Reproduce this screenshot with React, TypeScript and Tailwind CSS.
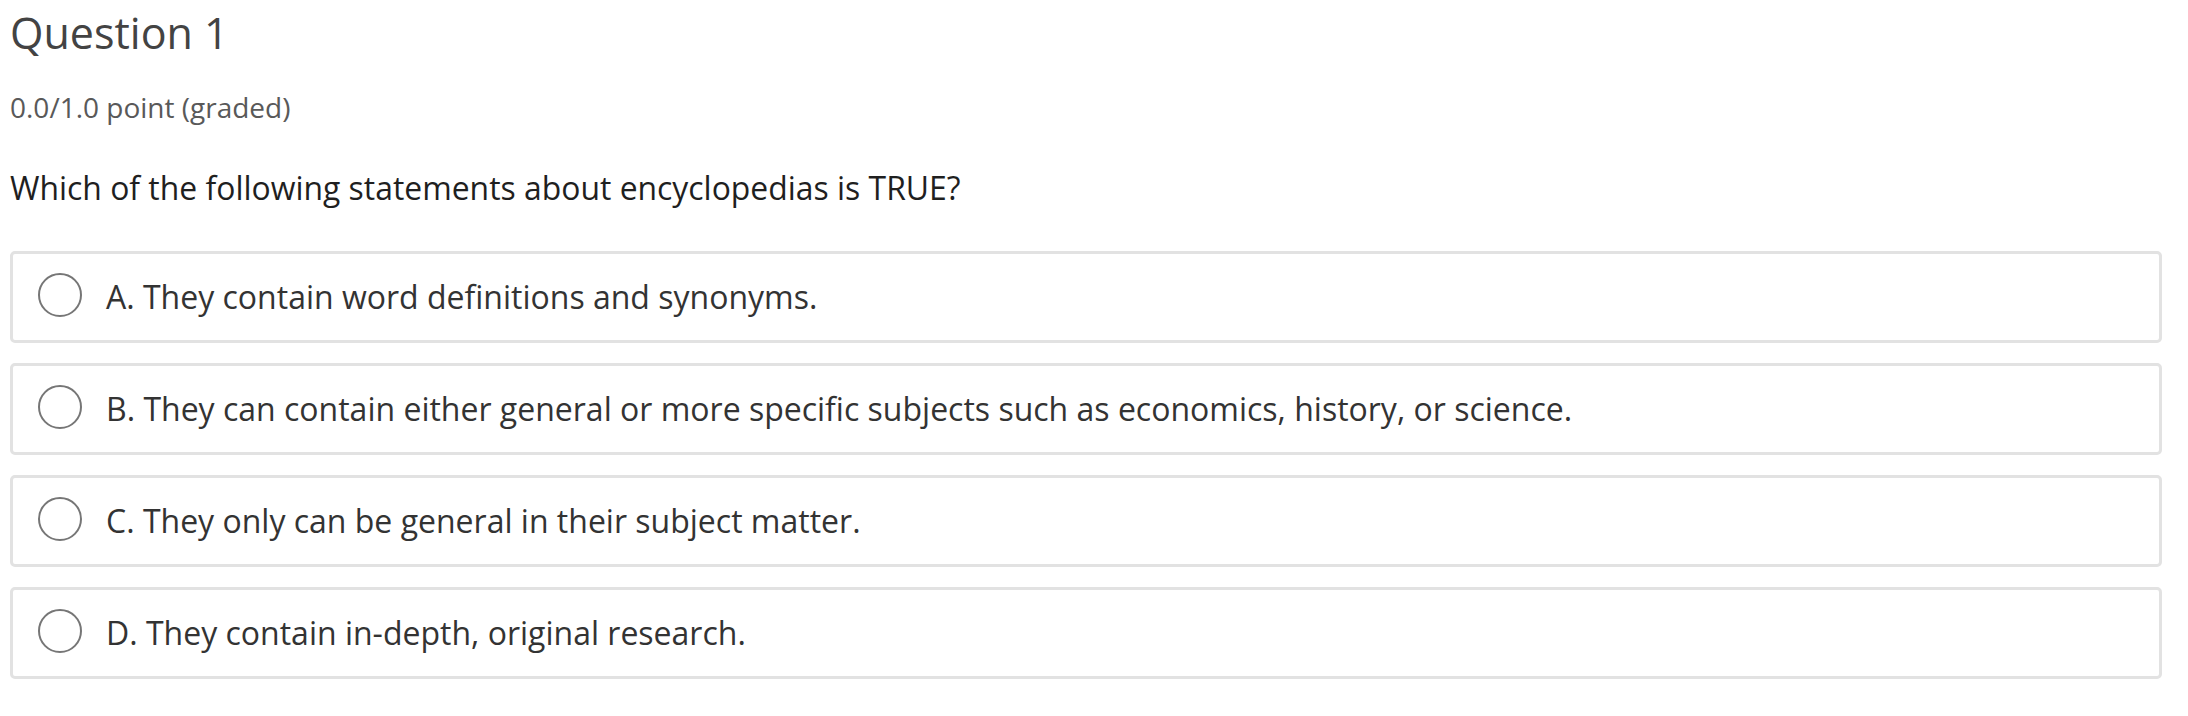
const options = [
  "A. They contain word definitions and synonyms.",
  "B. They can contain either general or more specific subjects such as economics, history, or science.",
  "C. They only can be general in their subject matter.",
  "D. They contain in-depth, original research.",
];

export default function App() {
  return (
    <div
      className="h-[716px] w-[2188px] bg-white pl-[10px]"
      style={{ fontFamily: '"Open Sans", "Noto Sans", sans-serif' }}
    >
      <h3 className="pt-[8px] text-[43px] leading-[50px] font-normal text-[#434343]">
        Question 1
      </h3>
      <div className="mt-[29px] text-[28px] leading-[40px] text-[#595959]">
        0.0/1.0 point (graded)
      </div>
      <p className="mt-[39px] text-[31.9px] leading-[44px] text-[#1f1f1f]">
        Which of the following statements about encyclopedias is TRUE?
      </p>

      <ul className="mt-[41px] flex w-[2152px] flex-col gap-[20px]">
        {options.map((label) => (
          <li key={label}>
            <label className="flex h-[92px] items-center rounded-[5px] border-[3px] border-[#e2e2e2] bg-white pl-[25px]">
              {/* radio sits a couple of px above the row's centre */}
              <span className="mb-[5px] h-[44px] w-[44px] shrink-0 rounded-full border-2 border-[#767676]" />
              <span className="ml-[24px] text-[32px] leading-[44px] text-[#333333]">
                {label}
              </span>
            </label>
          </li>
        ))}
      </ul>
    </div>
  );
}
